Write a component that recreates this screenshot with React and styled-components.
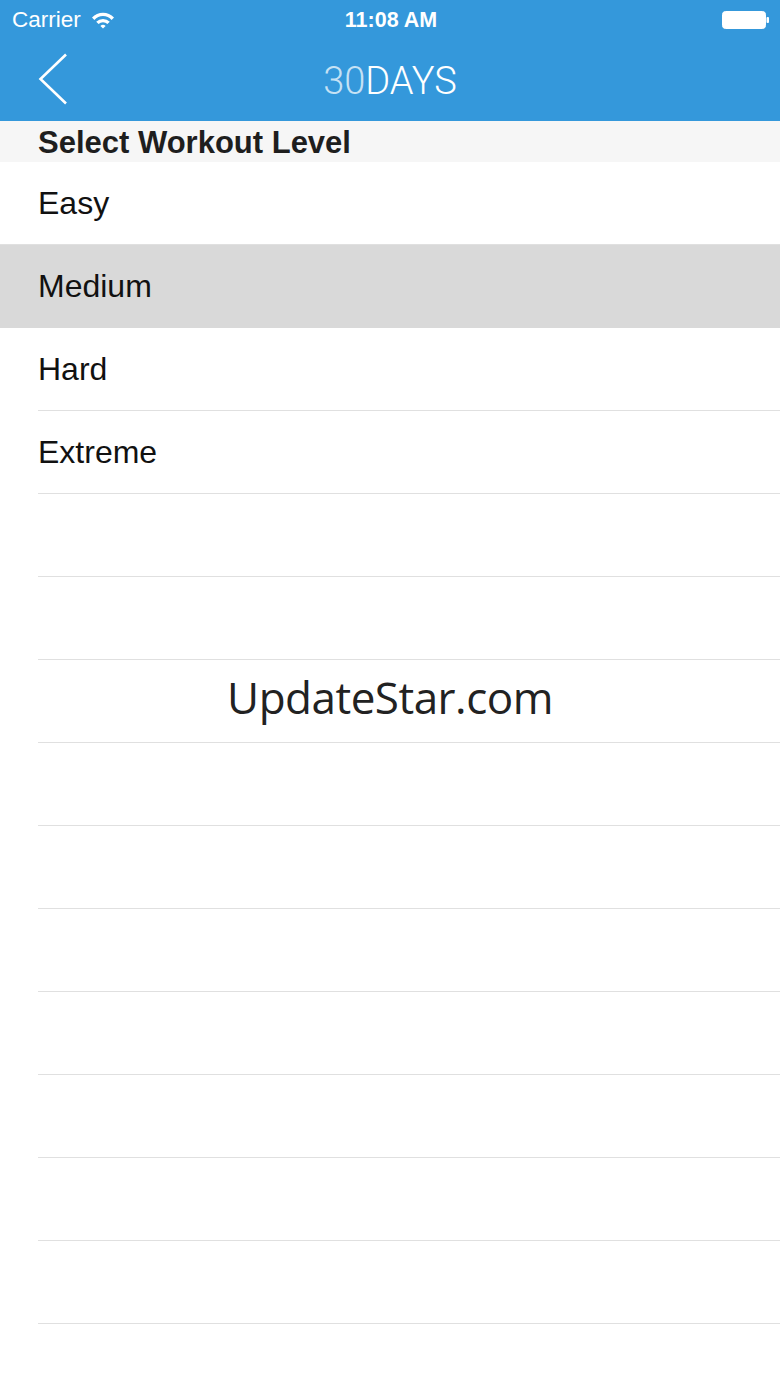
import styled, { createGlobalStyle } from 'styled-components'

const GlobalStyle = createGlobalStyle`
  html, body {
    margin: 0;
    padding: 0;
    background-color: #FFFFFF;
    overflow: hidden;
  }
  body {
    font-family: "Liberation Sans", Arial, sans-serif;
  }
`

const Screen = styled.div`
  position: relative;
  width: 780px;
  height: 1387px;
  overflow: hidden;
  background-color: #FFFFFF;
`

const Header = styled.header`
  background-color: #3498DB;
  color: #FFFFFF;
`

const StatusBar = styled.div`
  height: 40px;
  display: grid;
  grid-template-columns: 1fr auto 1fr;
  align-items: center;
  padding: 0 10px 0 12px;
`

const StatusLeft = styled.div`
  display: flex;
  align-items: center;
  gap: 10px;
  font-size: 22.5px;
`

const StatusTime = styled.div`
  font-size: 21.5px;
  font-weight: 700;
`

const StatusRight = styled.div`
  display: flex;
  justify-content: flex-end;
`

const NavBar = styled.div`
  height: 81px;
  display: grid;
  grid-template-columns: 120px 1fr 120px;
  align-items: center;
`

const BackButton = styled.button`
  border: 0;
  background: none;
  padding: 0 0 0 38px;
  height: 100%;
  display: flex;
  align-items: center;
  cursor: pointer;
  margin-top: -4px;
`

const Title = styled.h1`
  margin: 0;
  text-align: center;
  font-family: Roboto, "Liberation Sans", sans-serif;
  font-weight: 300;
  font-size: 38px;
  color: #FFFFFF;
`

const TitleFaded = styled.span`
  color: rgba(255, 255, 255, 0.72);
`

const SectionHeader = styled.h2`
  margin: 0;
  height: 41px;
  box-sizing: border-box;
  display: flex;
  align-items: center;
  padding: 3px 38px 0;
  background-color: #F6F6F6;
  font-size: 31px;
  font-weight: 700;
  color: #1E1E1E;
`

const List = styled.ul`
  list-style: none;
  margin: 0;
  padding: 0;
`

const Row = styled.li`
  position: relative;
  height: 83px;
  box-sizing: border-box;
  display: flex;
  align-items: center;
  padding: 0 38px 1px;
  font-size: 32px;
  color: #111111;
  background-color: ${p => (p.$selected ? '#D9D9D9' : '#FFFFFF')};

  &::after {
    content: '';
    position: absolute;
    right: 0;
    bottom: 0;
    left: ${p => (p.$fullLine ? '0' : '38px')};
    height: 1px;
    background-color: ${p => (p.$selected ? 'transparent' : '#E0E0E0')};
  }
`

const Watermark = styled.div`
  position: absolute;
  top: 667px;
  left: 0;
  right: 0;
  text-align: center;
  font-family: "Open Sans", "Noto Sans", sans-serif;
  font-size: 44px;
  letter-spacing: -0.5px;
  color: #222222;
  pointer-events: none;
`

const WifiIcon = () => (
  <svg width="24" height="18" viewBox="0 0 24 18">
    <path d="M1 6.5 A15 15 0 0 1 23 6.5 L20.6 8.9 A11.6 11.6 0 0 0 3.4 8.9 Z" fill="#FFFFFF" />
    <path d="M5.2 10.7 A9.6 9.6 0 0 1 18.8 10.7 L16.4 13.1 A6.2 6.2 0 0 0 7.6 13.1 Z" fill="#FFFFFF" />
    <path d="M9.4 14.9 A3.8 3.8 0 0 1 14.6 14.9 L12 17.5 Z" fill="#FFFFFF" />
  </svg>
)

const BatteryIcon = () => (
  <svg width="48" height="20" viewBox="0 0 48 20">
    <rect x="0.5" y="1.5" width="43" height="17" rx="3" fill="#FFFFFF" stroke="#FFFFFF" />
    <rect x="44.5" y="7" width="2.5" height="6" rx="1" fill="#FFFFFF" />
  </svg>
)

const BackIcon = () => (
  <svg width="30" height="52" viewBox="0 0 30 52">
    <path d="M28 1.5 L2.5 26 L28 50.5" fill="none" stroke="#FFFFFF" strokeWidth="2.6" />
  </svg>
)

const levels = ['Easy', 'Medium', 'Hard', 'Extreme']
const selectedLevel = 'Medium'
const emptyRows = 11

const App = () => {
  return (
    <Screen>
      <GlobalStyle />
      <Header>
        <StatusBar>
          <StatusLeft>
            <span>Carrier</span>
            <WifiIcon />
          </StatusLeft>
          <StatusTime>11:08 AM</StatusTime>
          <StatusRight>
            <BatteryIcon />
          </StatusRight>
        </StatusBar>
        <NavBar>
          <BackButton aria-label="Back">
            <BackIcon />
          </BackButton>
          <Title>
            <TitleFaded>30</TitleFaded>DAYS
          </Title>
          <div />
        </NavBar>
      </Header>
      <SectionHeader>Select Workout Level</SectionHeader>
      <List>
        {levels.map((level, i) => (
          <Row
            key={level}
            $selected={level === selectedLevel}
            $fullLine={levels[i + 1] === selectedLevel}
          >
            {level}
          </Row>
        ))}
        {Array.from({ length: emptyRows }).map((_, i) => (
          <Row key={'empty-' + i} />
        ))}
      </List>
      <Watermark>UpdateStar.com</Watermark>
    </Screen>
  )
}

export default App
